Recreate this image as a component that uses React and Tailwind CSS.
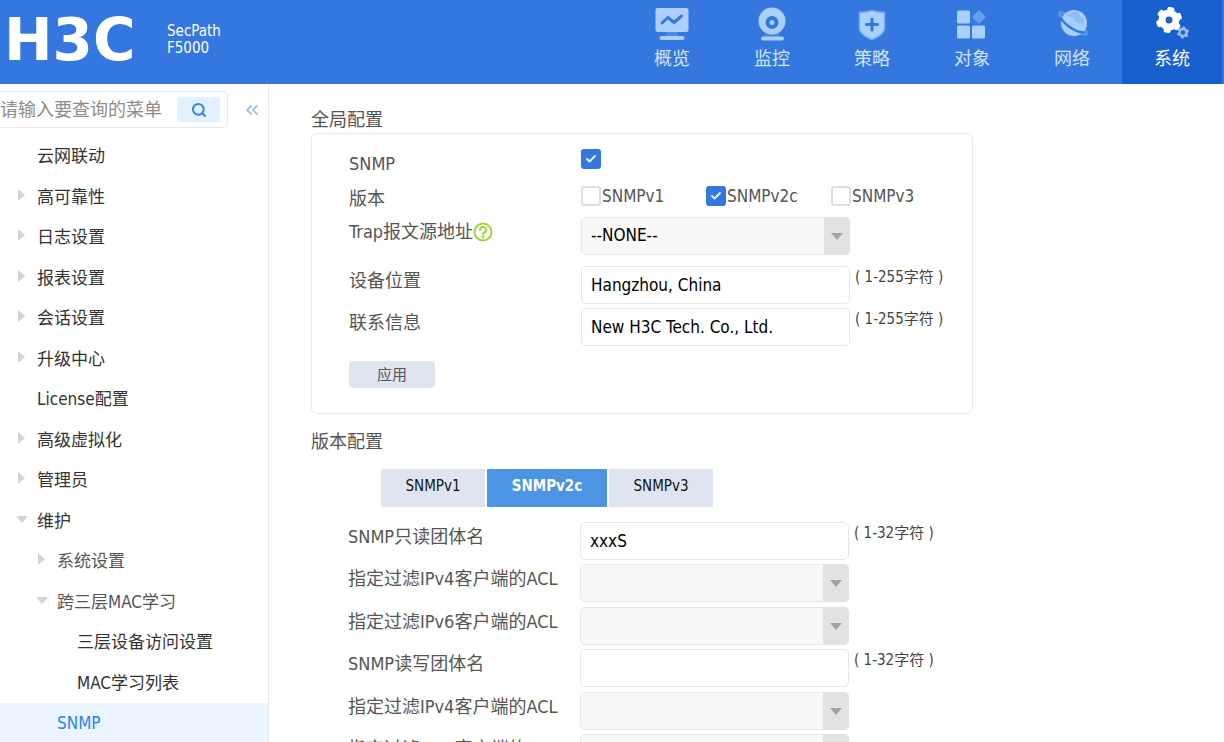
import { useState } from 'react';
import { Check, ChevronsLeft, Search } from 'lucide-react';

const OverviewIcon = () => (
  <svg width="34" height="34" viewBox="0 0 34 34">
    <rect x="0.5" y="1" width="33" height="24" rx="2" fill="#adcffb" />
    <path d="M11 25h12v4H11z" fill="#4a89e8" />
    <path d="M7 16l6-5.500 6 5L26.500 9" fill="none" stroke="#2f78e4" strokeWidth="3" strokeLinecap="round" strokeLinejoin="round" />
    <rect x="4.500" y="29" width="25" height="4" rx="2" fill="#adcffb" />
  </svg>
);

const MonitorIcon = () => (
  <svg width="34" height="34" viewBox="0 0 34 34">
    <path d="M10 24h14v5H10z" fill="#4a89e8" />
    <circle cx="17" cy="14" r="13.500" fill="#adcffb" />
    <circle cx="17" cy="15.500" r="4.500" fill="#adcffb" stroke="#2f78e4" strokeWidth="4" />
    <rect x="6" y="29.500" width="23" height="4" rx="2" fill="#adcffb" />
  </svg>
);

const PolicyIcon = () => (
  <svg width="34" height="34" viewBox="0 0 34 34">
    <path d="M17 2.500c3 1.300 8 2 13.500 2V21c0 5.500-6 9.500-13.500 12.500C9.500 30.500 3.500 26.500 3.500 21V4.500c5.500 0 10.500-.7 13.500-2z" fill="#6ba4ef" />
    <path d="M17 4c3 1.500 7.500 2 12 2v15c0 4.500-5 8-12 11-7-3-12-6.500-12-11V6c4.500 0 9-.5 12-2z" fill="#a9d0fb" />
    <path d="M17 12v11M11.500 17.500h11" stroke="#2f78e4" strokeWidth="3" strokeLinecap="round" />
  </svg>
);

const ObjectIcon = () => (
  <svg width="34" height="34" viewBox="0 0 34 34">
    <rect x="2" y="3.500" width="13" height="13" rx="1.500" fill="#a9d0fb" />
    <rect x="2" y="18.500" width="13" height="13" rx="1.500" fill="#a9d0fb" />
    <rect x="17" y="18.500" width="13" height="13" rx="1.500" fill="#a9d0fb" />
    <rect x="19" y="5" width="10" height="10" rx="1" transform="rotate(45 24 10)" fill="#659fec" />
  </svg>
);

const NetworkIcon = () => (
  <svg width="34" height="34" viewBox="0 0 34 34">
    <ellipse cx="18" cy="16.500" rx="17" ry="3.500" transform="rotate(38 18 16.500)" fill="none" stroke="#5c96de" strokeWidth="3" />
    <circle cx="19" cy="16" r="13" fill="#a8cffb" />
    <path d="M12 8c4-3 9-4 11-3s0 4 3 5 4 4 2 6-8-1-9-4-6-1-7-4z" fill="#8fbbf6" />
    <path d="M5.500 10.500C9 17 20 25.500 29.500 25.500" fill="none" stroke="#2f78e4" strokeWidth="2.500" />
  </svg>
);

const SystemIcon = () => (
  <svg width="34" height="34" viewBox="0 0 34 34">
    <g transform="translate(14 13)">
      <circle r="7" fill="none" stroke="#fff" strokeWidth="7" />
      {[10, 70, 130, 190, 250, 310].map((a) => (
        <rect key={a} x="-3.500" y="-13" width="7" height="6" rx="2" transform={`rotate(${a})`} fill="#fff" />
      ))}
    </g>
    <g transform="translate(28 25.500)">
      <circle r="3.500" fill="none" stroke="#98bff3" strokeWidth="2.500" />
      {[10, 70, 130, 190, 250, 310].map((a) => (
        <rect key={a} x="-1.500" y="-6" width="3" height="3" rx="1" transform={`rotate(${a})`} fill="#98bff3" />
      ))}
    </g>
  </svg>
);

const navItems = [
  { label: '概览', Icon: OverviewIcon },
  { label: '监控', Icon: MonitorIcon },
  { label: '策略', Icon: PolicyIcon },
  { label: '对象', Icon: ObjectIcon },
  { label: '网络', Icon: NetworkIcon },
  { label: '系统', Icon: SystemIcon, active: true },
];

const menuItems = [
  { label: '云网联动', level: 1 },
  { label: '高可靠性', level: 1, arrow: 'right' },
  { label: '日志设置', level: 1, arrow: 'right' },
  { label: '报表设置', level: 1, arrow: 'right' },
  { label: '会话设置', level: 1, arrow: 'right' },
  { label: '升级中心', level: 1, arrow: 'right' },
  { label: 'License配置', level: 1 },
  { label: '高级虚拟化', level: 1, arrow: 'right' },
  { label: '管理员', level: 1, arrow: 'right' },
  { label: '维护', level: 1, arrow: 'down' },
  { label: '系统设置', level: 2, arrow: 'right' },
  { label: '跨三层MAC学习', level: 2, arrow: 'down' },
  { label: '三层设备访问设置', level: 3 },
  { label: 'MAC学习列表', level: 3 },
  { label: 'SNMP', level: 2, active: true },
];

const indent = { 1: 'pl-[15px]', 2: 'pl-[35px]', 3: 'pl-[55px]' };

const versionFields = [
  { id: 'ro-community', label: 'SNMP只读团体名', type: 'text', value: 'xxxS', hint: '( 1-32字符 )' },
  { id: 'ro-acl4', label: '指定过滤IPv4客户端的ACL', type: 'select' },
  { id: 'ro-acl6', label: '指定过滤IPv6客户端的ACL', type: 'select' },
  { id: 'rw-community', label: 'SNMP读写团体名', type: 'text', value: '', hint: '( 1-32字符 )' },
  { id: 'rw-acl4', label: '指定过滤IPv4客户端的ACL', type: 'select' },
  { id: 'rw-acl6', label: '指定过滤IPv6客户端的ACL', type: 'select' },
];

const MenuArrow = ({ dir }) => (
  <svg width="14" height="14" viewBox="0 0 14 14" className="mr-2 mb-1.5 shrink-0" fill="#d3d3d3">
    {dir === 'right' && <path d="M3 1l7 6-7 6z" />}
    {dir === 'down' && <path d="M1 4h12l-6 7z" />}
  </svg>
);

const CheckBox = ({ id, label, defaultChecked }) => (
  <span className="flex items-center">
    <span className="relative grid size-5 place-items-center">
      <input
        id={id}
        type="checkbox"
        defaultChecked={defaultChecked}
        className="peer size-5 appearance-none rounded-[3px] border-2 border-[#dedede] bg-white checked:border-[#3377df] checked:bg-[#3377df]"
      />
      <Check size={12} strokeWidth={4} className="pointer-events-none absolute hidden text-[#e6f0ff] peer-checked:block" />
    </span>
    {label && <label htmlFor={id} className="pl-px">{label}</label>}
  </span>
);

const TextField = ({ id, value }) => (
  <input
    id={id}
    type="text"
    defaultValue={value}
    className="h-[38px] w-[269px] shrink-0 rounded-[5px] border border-[#e6e7ec] bg-white px-[9px] text-black outline-none"
  />
);

const SelectField = ({ id, options }) => (
  <span className="relative block h-[38px] w-[269px] shrink-0">
    <select id={id} className="h-full w-full appearance-none rounded-[5px] border border-[#e6e7ec] bg-[#f8f8f8] pr-8 pl-[9px] text-black outline-none">
      {options.map((o) => (
        <option key={o}>{o}</option>
      ))}
    </select>
    <span className="pointer-events-none absolute inset-y-0 right-0 grid w-[26px] place-items-center rounded-r-[5px] bg-[#e2e2e2]">
      <svg width="12" height="7" viewBox="0 0 12 7" fill="#a2a2a2">
        <path d="M0 0h12L6 7z" />
      </svg>
    </span>
  </span>
);

const HelpIcon = () => (
  <svg width="20" height="20" viewBox="0 0 20 20" fill="none" stroke="#9bd83c" strokeWidth="2">
    <circle cx="10" cy="10" r="8.500" />
    <path d="M7 8a3 3 0 1 1 4.500 2.500C10.500 11 10 11.500 10 12.500" strokeLinecap="round" />
    <circle cx="10" cy="15" r="0.500" />
  </svg>
);

const Field = ({ id, label, hint, help, className, children }) => (
  <div className={`flex items-start ${className}`}>
    <div className="flex w-[232px] shrink-0 items-center pt-[3px] text-[18px] leading-6">
      <label htmlFor={id}>{label}</label>
      {help && <HelpIcon />}
    </div>
    {children}
    {hint && <span className="pl-[5px] text-[15px] leading-[22px] whitespace-nowrap text-[#444]">{hint}</span>}
  </div>
);

export default function App() {
  const [tab, setTab] = useState('SNMPv2c');

  return (
    <div className="flex h-screen flex-col overflow-hidden bg-white font-['DejaVu_Sans_Condensed','Noto_Sans_CJK_SC',sans-serif] text-[17px] text-[#555]">
      {/* Header */}
      <header className="flex h-[84px] shrink-0 items-stretch bg-[#3377df] pr-0.5 pl-1 text-white">
        <div className="flex items-center pb-1">
          <span className="w-[163px] font-['DejaVu_Sans',sans-serif] text-[58px] leading-none font-bold">H3C</span>
          <span className="text-[15px] leading-[17px]">
            SecPath
            <br />
            F5000
          </span>
        </div>
        <nav className="ml-auto flex">
          {navItems.map(({ label, Icon, active }) => (
            <a
              key={label}
              href="#"
              className={`flex w-[100px] flex-col items-center pt-[7px] text-[18px] leading-6 ${active ? 'bg-[#1860cd] text-white' : 'text-[#d3e4fb]'}`}
            >
              <Icon />
              <span className="pt-1.5">{label}</span>
            </a>
          ))}
        </nav>
      </header>

      <div className="flex min-h-0 flex-1">
        {/* Sidebar */}
        <aside className="w-[269px] shrink-0 overflow-hidden border-r border-[#e6e7f0]">
          <div className="flex items-center pt-[7px]">
            <div className="flex h-[37px] w-[228px] items-center rounded-r-[5px] border border-l-0 border-[#e6e7ee] pr-[7px]">
              <input
                type="text"
                aria-label="菜单查询"
                placeholder="请输入要查询的菜单"
                className="min-w-0 flex-1 text-[18px] outline-none placeholder:text-[#8c8c8c]"
              />
              <button type="button" aria-label="查询" className="grid h-[25px] w-[43px] place-items-center rounded-[4px] bg-[#e3f1fe] text-[#3a82e4]">
                <Search size={16} strokeWidth={3} />
              </button>
            </div>
            <button type="button" aria-label="收起" className="ml-3.5 text-[#8ebaf6]">
              <ChevronsLeft size={20} strokeWidth={2} />
            </button>
          </div>
          <ul className="pt-2 text-[#333]">
            {menuItems.map(({ label, level, arrow, active }) => (
              <li key={label} className="odd:h-10 even:h-[41px]">
                <a href="#" className={`flex h-full items-center pt-0.5 ${indent[level]} ${active ? 'bg-[#ecf4ff] text-[#2e80f5]' : ''} ${level === 2 && !active ? 'text-[#555]' : ''}`}>
                  <MenuArrow dir={arrow} />
                  {label}
                </a>
              </li>
            ))}
          </ul>
        </aside>

        {/* Content */}
        <main className="min-w-0 flex-1 overflow-y-auto pt-[22px] pl-[42px] [scrollbar-width:none]">
          <h2 className="text-[18px] leading-[27px]">全局配置</h2>
          <form className="max-w-[662px] rounded-[5px] border border-[#e9e9f1] pt-[15px] pb-[25px] pl-[37px]" onSubmit={(e) => e.preventDefault()}>
            <Field id="snmp" label="SNMP" className="h-[35px]">
              <CheckBox id="snmp" defaultChecked />
            </Field>
            <fieldset className="flex h-[33px] items-start">
              <legend className="float-left w-[232px] pt-[3px] text-[18px] leading-6">版本</legend>
              <div className="flex leading-6">
                <div className="w-[125px]"><CheckBox id="v1" label="SNMPv1" /></div>
                <div className="w-[125px]"><CheckBox id="v2c" label="SNMPv2c" defaultChecked /></div>
                <div><CheckBox id="v3" label="SNMPv3" /></div>
              </div>
            </fieldset>
            <Field id="trap" label="Trap报文源地址" help className="h-[49px]">
              <SelectField id="trap" options={['--NONE--']} />
            </Field>
            <Field id="location" label="设备位置" hint="( 1-255字符 )" className="h-[42px]">
              <TextField id="location" value="Hangzhou, China" />
            </Field>
            <Field id="contact" label="联系信息" hint="( 1-255字符 )" className="h-[53px]">
              <TextField id="contact" value="New H3C Tech. Co., Ltd." />
            </Field>
            <button type="submit" className="block h-[27px] w-[86px] rounded-[4px] bg-[#dfe5f0] pt-0.5 text-[15px]">
              应用
            </button>
          </form>

          <h2 className="pt-[14px] text-[18px] leading-[27px]">版本配置</h2>
          <div role="tablist" className="mt-[14px] flex gap-0.5 pl-[70px] text-[15px]">
            {['SNMPv1', 'SNMPv2c', 'SNMPv3'].map((name) => (
              <button
                key={name}
                type="button"
                role="tab"
                aria-selected={tab === name}
                onClick={() => setTab(name)}
                className={`h-[38px] pb-1 ${tab === name ? 'w-[120px] bg-[#4c95e2] font-bold text-white' : 'w-[104px] bg-[#dfe5f0] text-[#111]'}`}
              >
                {name}
              </button>
            ))}
          </div>
          <div className="pt-[15px] pl-[37px]">
            {versionFields.map(({ id, label, type, value, hint }) => (
              <Field key={id} id={id} label={label} hint={hint} className="odd:h-[42px] even:h-[43px]">
                {type === 'text' ? <TextField id={id} value={value} /> : <SelectField id={id} options={['']} />}
              </Field>
            ))}
          </div>
        </main>
      </div>
    </div>
  );
}
